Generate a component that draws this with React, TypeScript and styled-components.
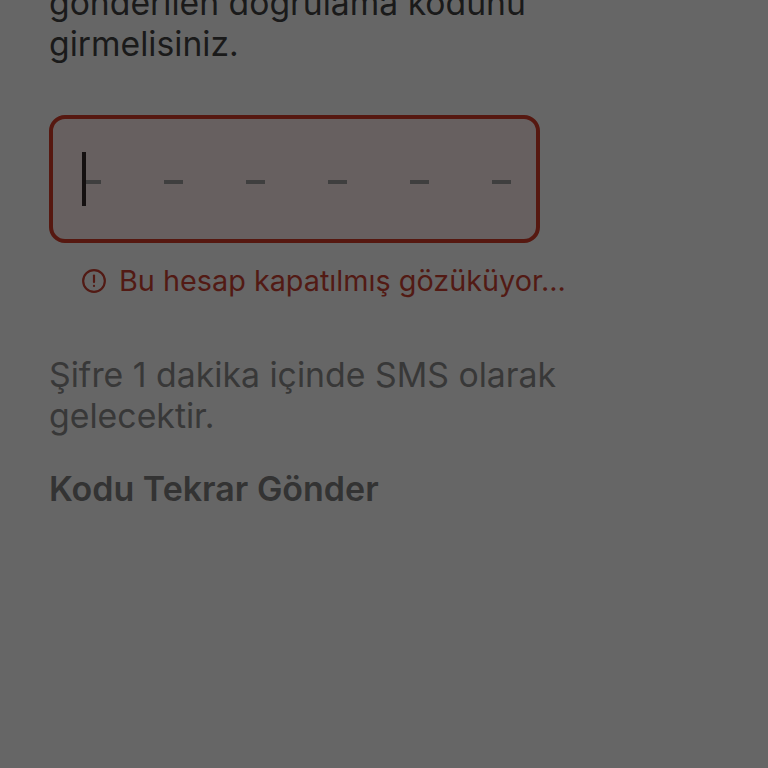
import { FC } from 'react';
import styled, { createGlobalStyle } from 'styled-components';

const SLOTS = 6;

const GlobalStyle = createGlobalStyle`
  html, body {
    margin: 0;
    padding: 0;
    background: #666666;
  }
`;

const App: FC = () => {
  return (
    <>
      <GlobalStyle />
      <Screen>
        <Description>
          gönderilen doğrulama kodunu
          <br />
          girmelisiniz.
        </Description>
        <CodeBox>
          {Array.from({ length: SLOTS }).map((_, i) => (
            <Slot key={i}>
              {i === 0 && <Caret />}
              <Dash />
            </Slot>
          ))}
        </CodeBox>
        <ErrorRow>
          <ErrorIcon />
          <span>Bu hesap kapatılmış gözüküyor...</span>
        </ErrorRow>
        <Hint>
          Şifre 1 dakika içinde SMS olarak
          <br />
          gelecektir.
        </Hint>
        <Resend>Kodu Tekrar Gönder</Resend>
      </Screen>
    </>
  );
};

const ErrorIcon: FC = () => (
  <svg width="26" height="26" viewBox="0 0 24 24" fill="none" stroke="currentColor" strokeWidth="2" strokeLinecap="round">
    <circle cx="12" cy="12" r="10" />
    <line x1="12" y1="7" x2="12" y2="13" />
    <line x1="12" y1="16.5" x2="12" y2="16.6" />
  </svg>
);

const Screen = styled.div`
  display: flex;
  flex-direction: column;
  align-items: flex-start;
  width: 768px;
  height: 768px;
  padding-left: 49px;
  box-sizing: border-box;
  overflow: hidden;
  background: #666666;
  font-family: Inter, 'Liberation Sans', sans-serif;
`;

const Description = styled.p`
  margin: -18px 0 0;
  font-size: 33.7px;
  line-height: 41px;
  color: #1a1a1a;
  white-space: nowrap;
`;

const CodeBox = styled.div`
  display: flex;
  align-items: center;
  justify-content: space-between;
  width: 491px;
  height: 128px;
  margin-top: 51px;
  padding: 0 25px 0 28.5px;
  box-sizing: border-box;
  border: 4px solid #561810;
  border-radius: 16px;
  background: #676060;
`;

const Slot = styled.div`
  position: relative;
  display: flex;
  align-items: center;
  width: 19.5px;
  height: 54px;
`;

const Dash = styled.div`
  width: 19.5px;
  height: 4px;
  margin-top: 5px;
  background: #3f3f3f;
`;

const Caret = styled.div`
  position: absolute;
  left: 0.5px;
  top: 0;
  width: 4px;
  height: 54px;
  background: #141010;
`;

const ErrorRow = styled.div`
  display: flex;
  align-items: center;
  gap: 12px;
  margin: 21px 0 0 32px;
  font-size: 28.8px;
  line-height: 34px;
  color: #521a14;
  white-space: nowrap;
`;

const Hint = styled.p`
  margin: 56px 0 0;
  font-size: 33.8px;
  line-height: 41px;
  color: #383838;
  white-space: nowrap;
`;

const Resend = styled.div`
  margin-top: 33px;
  font-size: 34px;
  line-height: 40px;
  font-weight: 600;
  color: #333333;
  white-space: nowrap;
`;

export default App;
